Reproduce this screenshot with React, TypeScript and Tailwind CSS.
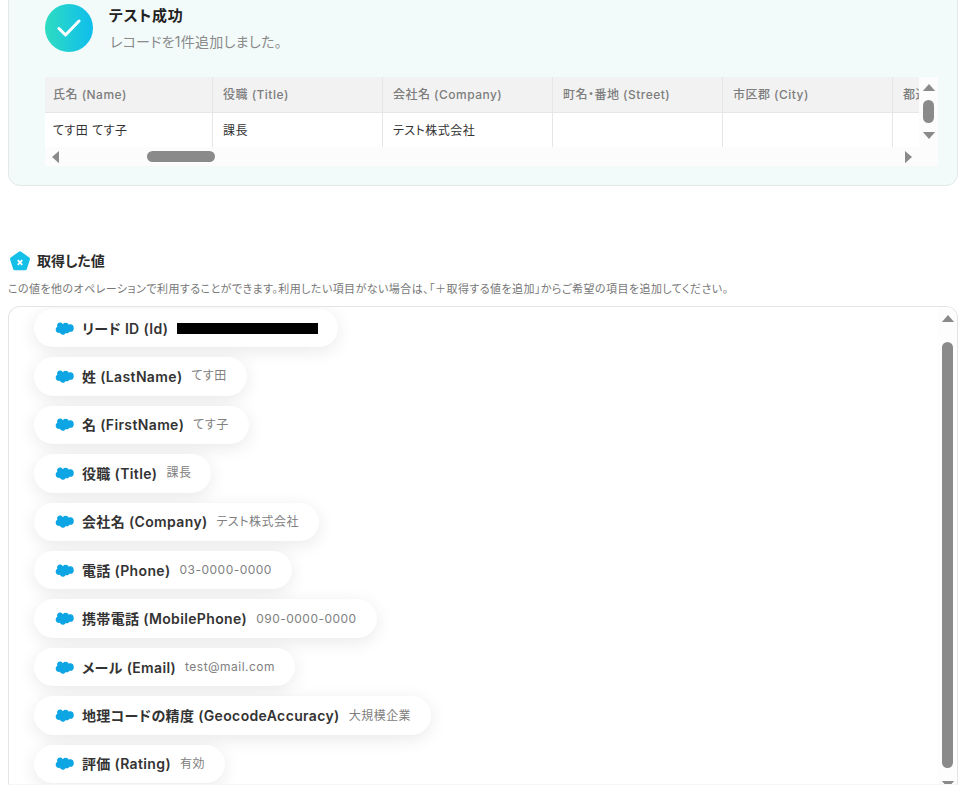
const font = { fontFamily: '"Inter", "Noto Sans CJK JP", sans-serif' };

const columns = [
    { name: "氏名 (Name)", value: "てす田 てす子", width: "w-[168px] pl-[8px]" },
    { name: "役職 (Title)", value: "課長", width: "w-[170px] pl-[10px]" },
    { name: "会社名 (Company)", value: "テスト株式会社", width: "w-[170px] pl-[10px]" },
    { name: "町名・番地 (Street)", value: "", width: "w-[170px] pl-[10px]" },
    { name: "市区郡 (City)", value: "", width: "w-[170px] pl-[10px]" },
    { name: "都道府県 (State)", value: "", width: "w-[170px] pl-[10px]" },
];

const fields = [
    { label: "リード ID (Id)", value: "", hidden: true },
    { label: "姓 (LastName)", value: "てす田" },
    { label: "名 (FirstName)", value: "てす子" },
    { label: "役職 (Title)", value: "課長" },
    { label: "会社名 (Company)", value: "テスト株式会社" },
    { label: "電話 (Phone)", value: "03-0000-0000" },
    { label: "携帯電話 (MobilePhone)", value: "090-0000-0000" },
    { label: "メール (Email)", value: "test@mail.com" },
    { label: "地理コードの精度 (GeocodeAccuracy)", value: "大規模企業" },
    { label: "評価 (Rating)", value: "有効" },
];

function Arrow({ dir, className }: { dir: "up" | "down" | "left" | "right"; className: string }) {
    const points = {
        up: "0,8 7,0 14,8",
        down: "0,0 14,0 7,8",
        left: "8,0 8,14 0,7",
        right: "0,0 8,7 0,14",
    }[dir];
    const box = dir === "up" || dir === "down" ? "0 0 14 8" : "0 0 8 14";
    return (
        <svg viewBox={box} className={className} fill="#8a8a8a">
            <polygon points={points} />
        </svg>
    );
}

function Cloud() {
    return (
        <svg viewBox="0 0 20 14" className="h-[13px] w-[19px] shrink-0" fill="#0ea5e4">
            <path d="M8.200 2.300C9 1.400 10 .9 11.200.9c1.500 0 2.700.8 3.400 2 .6-.3 1.200-.4 1.800-.4 2.200 0 3.600 1.800 3.600 4.100s-1.500 4-3.700 4c-.3 0-.6 0-.9-.1-.5 1-1.500 1.600-2.700 1.600-.5 0-1-.1-1.400-.3-.6 1.200-1.700 2-3.100 2-1.400 0-2.600-.8-3.200-2.100-.3.1-.5.100-.8.100C2 11.800.5 10.300.5 8.300c0-1.400.7-2.500 1.800-3.200C2.100 4.600 2 4.100 2 3.600 2 1.800 3.500.5 5.300.5c1.200 0 2.200.7 2.900 1.800z" />
        </svg>
    );
}

function Pentagon() {
    return (
        <svg viewBox="1 0.500 18 18" className="h-[20px] w-[20px]">
            <path d="M10 .8a1.800 1.800 0 0 1 1 .3l7.300 5.200a1.700 1.700 0 0 1 .6 1.900l-2.700 8.500a1.700 1.700 0 0 1-1.600 1.200H5.400a1.700 1.700 0 0 1-1.600-1.200L1.100 8.200a1.700 1.700 0 0 1 .6-1.900L9 1.100a1.800 1.800 0 0 1 1-.3z" fill="#14bfe8" />
            <path d="M8 8.800l4 4.200M12 8.800l-4 4.200" stroke="#fff" strokeWidth="1.600" />
        </svg>
    );
}

export default function App() {
    return (
        <div className="h-[788px] overflow-hidden bg-white pl-2 pr-[7px] [font-feature-settings:'palt']" style={font}>
            {/* test result card */}
            <div className="-mt-[20px] h-[206px] rounded-xl border border-[#e3e9e9] bg-[#f2fafa] pl-[36px] pr-[19px] pt-[23px]">
                <div className="flex items-start gap-[16px]">
                    <div className="flex h-[48px] w-[48px] items-center justify-center rounded-full bg-gradient-to-r from-[#2fdcc0] to-[#10bdec]">
                        <svg viewBox="0 0 24 18" className="h-[18px] w-[24px]" fill="none" stroke="#fff" strokeWidth="3" strokeLinecap="round" strokeLinejoin="round">
                            <path d="M2 9.500l6.500 6.500L22 2" />
                        </svg>
                    </div>
                    <div>
                        <p className="text-[15px] leading-[24px] font-semibold tracking-[0.8px] text-[#222]">テスト成功</p>
                        <p className="mt-[4px] pl-[1px] text-[14px] leading-[20px] tracking-[0.28px] text-[#8a8a8a]">レコードを1件追加しました。</p>
                    </div>
                </div>

                <div className="mt-[25px] flex h-[89px] bg-[#fcfcfc]">
                    <div className="flex w-[874px] flex-col">
                        <div className="h-[70px] overflow-hidden bg-white">
                            <div className="flex w-[1100px] flex-col">
                                <div className="flex h-[36px] border-b border-[#e6e6e6] bg-[#f2f2f2]">
                                    {columns.map((col) => (
                                        <div key={col.name} className={`${col.width} border-r border-[#e6e6e6] text-[12px] leading-[36px] font-medium tracking-[0.48px] text-[#7d7d7d]`}>
                                            {col.name}
                                        </div>
                                    ))}
                                </div>
                                <div className="flex h-[34px]">
                                    {columns.map((col) => (
                                        <div key={col.name} className={`${col.width} border-r border-[#e6e6e6] text-[12px] leading-[36px] tracking-[0.48px] text-[#333]`}>
                                            {col.value}
                                        </div>
                                    ))}
                                </div>
                            </div>
                        </div>
                        <div className="flex h-[19px] items-center px-[7px]">
                            <Arrow dir="left" className="h-[14px] w-[7px]" />
                            <div className="ml-[88px] h-[11px] w-[68px] rounded-full bg-[#8a8a8a]" />
                            <Arrow dir="right" className="ml-auto h-[14px] w-[7px]" />
                        </div>
                    </div>
                    <div className="flex h-[70px] w-[19px] flex-col items-center pt-[7px]">
                        <Arrow dir="up" className="h-[7px] w-[14px]" />
                        <div className="mt-[9px] h-[23px] w-[11px] rounded-full bg-[#8a8a8a]" />
                        <Arrow dir="down" className="mt-[9px] h-[7px] w-[14px]" />
                    </div>
                </div>
            </div>

            {/* retrieved values */}
            <div className="mt-[65px] flex items-center gap-[7px] pl-[2px]">
                <Pentagon />
                <h2 className="text-[14px] leading-[20px] font-semibold text-[#2b2b2b]">取得した値</h2>
            </div>
            <p className="mt-[10px] whitespace-nowrap text-[11px] leading-[16px] tracking-[0.44px] text-[#777]">
                この値を他のオペレーションで利用することができます。利用したい項目がない場合は、「＋取得する値を追加」からご希望の項目を追加してください。
            </p>

            <div className="mt-[9px] flex h-[479px] justify-between overflow-hidden rounded-t-xl border border-b-[#f6f6f6] border-[#e4e4e4] pl-[25px]">
                <div className="flex flex-col items-start gap-[10px] pt-[1.800px]">
                    {fields.map((field) => (
                        <div key={field.label} className="flex h-[38.440px] shrink-0 items-center whitespace-nowrap rounded-full bg-white pl-[21px] pr-[20px] shadow-[0_4px_18px_rgba(0,0,0,0.09)]">
                            <Cloud />
                            <span className="ml-[8px] text-[14px] font-semibold tracking-[0.36px] text-[#333]">{field.label}</span>
                            {field.hidden ? (
                                <span className="ml-[9px] mt-[1px] h-[11px] w-[141px] bg-black" />
                            ) : (
                                <span className="ml-[9px] text-[12px] tracking-[0.48px] text-[#808080]">{field.value}</span>
                            )}
                        </div>
                    ))}
                </div>
                <div className="flex w-[19px] shrink-0 flex-col items-center bg-[#fdfdfd] pt-[8px]">
                    <Arrow dir="up" className="h-[7px] w-[14px] shrink-0" />
                    <div className="mt-[20px] h-[426px] w-[11px] shrink-0 rounded-full bg-[#8a8a8a]" />
                    <Arrow dir="down" className="mt-[13px] h-[7px] w-[14px] shrink-0" />
                </div>
            </div>
        </div>
    );
}
